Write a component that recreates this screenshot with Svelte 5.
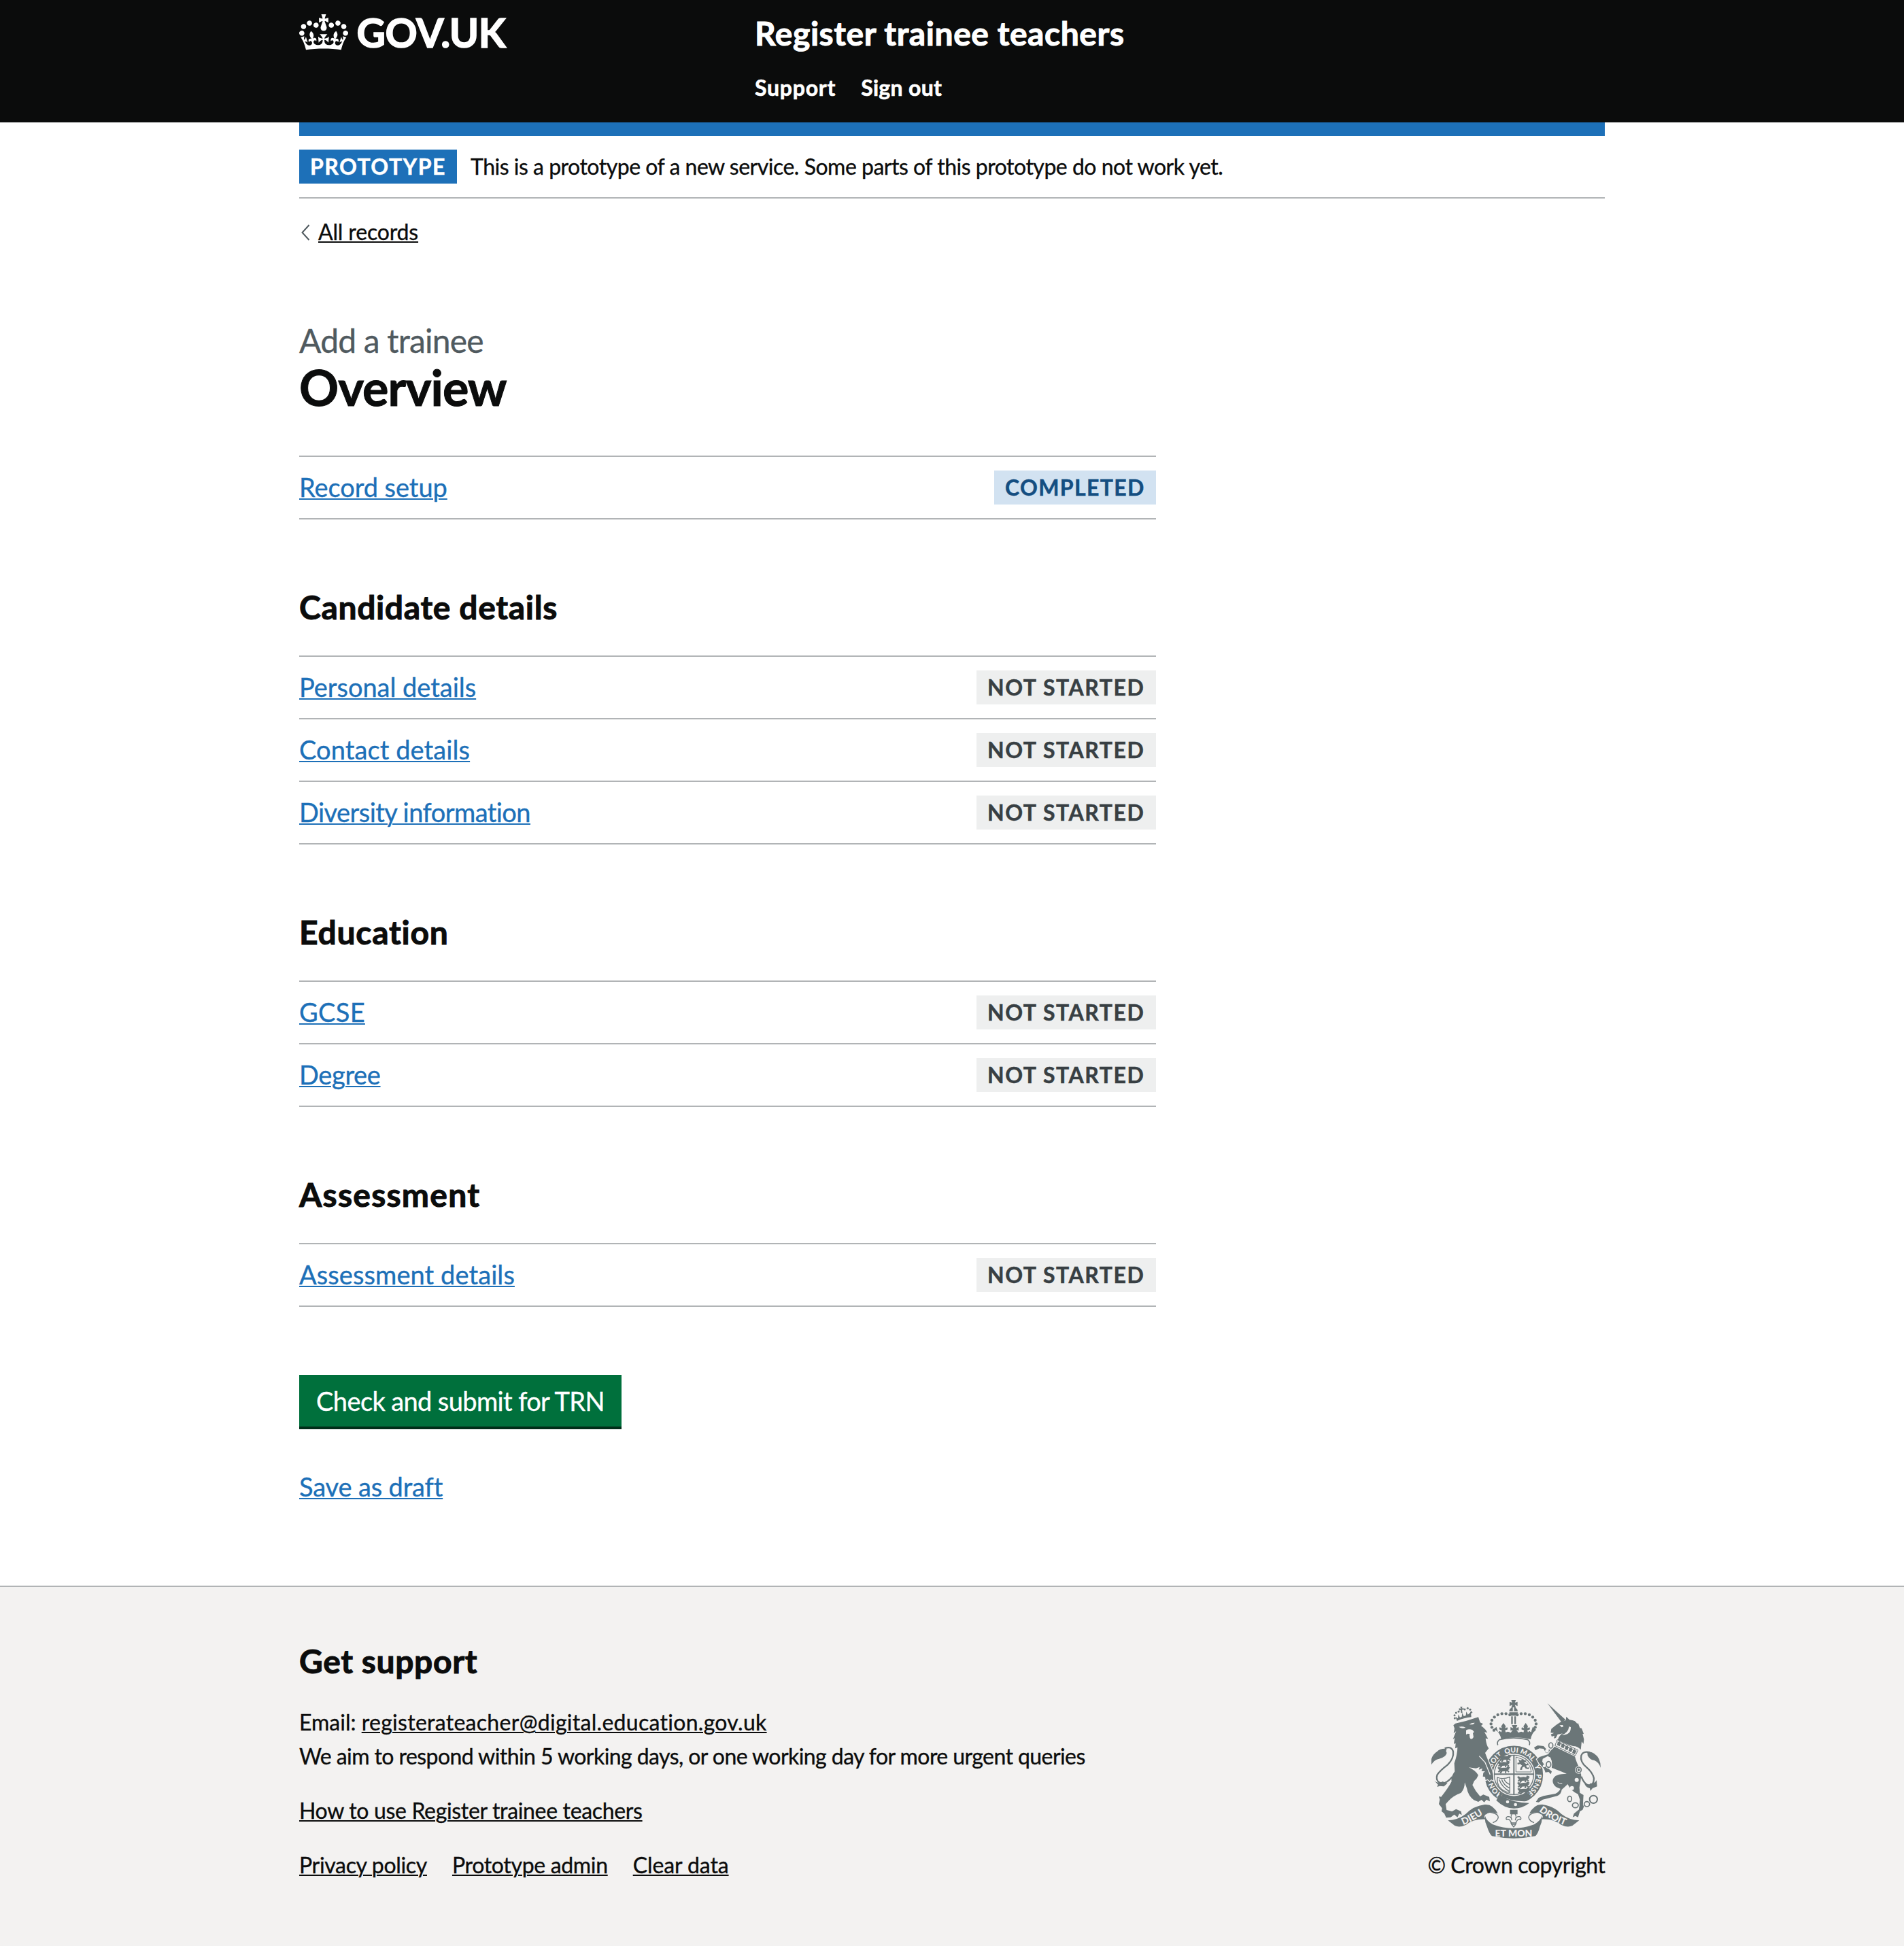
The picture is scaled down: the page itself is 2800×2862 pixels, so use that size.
<script>
  // `tracking` is the letter spacing of a label, in pixels.
  const sections = [
    { tasks: [{ label: 'Record setup', tracking: -0.07, done: true }] },
    {
      heading: 'Candidate details',
      tracking: 0.65,
      tasks: [
        { label: 'Personal details', tracking: -0.03 },
        { label: 'Contact details', tracking: 0.09 },
        { label: 'Diversity information', tracking: -0.55 }
      ]
    },
    {
      heading: 'Education',
      tracking: 0.75,
      tasks: [
        { label: 'GCSE', tracking: 0.3 },
        { label: 'Degree', tracking: -0.35 }
      ]
    },
    {
      heading: 'Assessment',
      tracking: 1.25,
      tasks: [{ label: 'Assessment details', tracking: 0.08 }]
    }
  ];

  // Pearls on the left half of the crown's arches; the right half is mirrored.
  const pearls = [[421, 126], [404, 121], [386, 121], [368, 126], [353, 136], [342, 150], [338, 166], [342, 181], [351, 194]];
  const lionPearls = [[178, 141], [177, 128], [184, 117], [195, 112], [222, 102], [235, 97], [246, 103], [251, 115]];
  const links = [[602, 261, 9, 12], [592, 345, 10, 13], [725, 369, 11, 12], [685, 497, 9, 12], [710, 525, 13, 11], [761, 520, 12, 11]];
  // Rows of walking lions in two of the shield's quarters.
  const passant = [[368, 306], [362, 332], [362, 357], [449, 398], [449, 424], [450, 450]];
  // Ornaments on the unicorn's collar.
  const collar = [[637, 252], [654, 261], [671, 270], [688, 278], [704, 287]];
</script>

<header class="header">
  <div class="container header-grid">
    <a class="logo" href="#home" aria-label="GOV.UK">
      <svg width="330" height="70" viewBox="0 0 330 70">
        <g transform="translate(0 1) scale(0.5455)">
          <path d="M25 30.2c3.5 1.5 7.7-.2 9.1-3.7 1.5-3.6-.2-7.8-3.9-9.2-3.6-1.4-7.6.3-9.1 3.9-1.4 3.5.3 7.5 3.9 9zM9 39.5c3.6 1.5 7.8-.2 9.2-3.7 1.5-3.6-.2-7.8-3.9-9.1-3.6-1.5-7.6.2-9.1 3.8-1.4 3.5.3 7.5 3.8 9zM4.4 57.2c3.5 1.5 7.7-.2 9.1-3.8 1.5-3.6-.2-7.7-3.9-9.1-3.5-1.5-7.6.3-9.1 3.8-1.4 3.5.3 7.6 3.9 9.1zm38.3-21.4c3.5 1.5 7.7-.2 9.1-3.8 1.5-3.6-.2-7.7-3.9-9.1-3.6-1.5-7.6.3-9.1 3.8-1.3 3.6.4 7.7 3.9 9.1zm64.4-5.6c-3.6 1.5-7.8-.2-9.1-3.7-1.5-3.6.2-7.8 3.8-9.2 3.6-1.4 7.7.3 9.2 3.9 1.3 3.5-.4 7.5-3.9 9zm15.9 9.3c-3.6 1.5-7.7-.2-9.1-3.7-1.5-3.6.2-7.8 3.7-9.1 3.6-1.5 7.7.2 9.2 3.8 1.5 3.5-.3 7.5-3.8 9zm4.7 17.7c-3.6 1.5-7.8-.2-9.2-3.8-1.5-3.6.2-7.7 3.9-9.1 3.6-1.5 7.7.3 9.2 3.8 1.3 3.5-.4 7.6-3.9 9.1zM89.3 35.8c-3.6 1.5-7.8-.2-9.2-3.8-1.4-3.6.2-7.7 3.9-9.1 3.6-1.5 7.7.3 9.2 3.8 1.4 3.6-.3 7.7-3.9 9.1zM69.7 17.7l8.9 4.7V9.3l-8.9 2.8c-.2-.3-.5-.6-.9-.9L72.4 0H59.6l3.5 11.2c-.3.3-.6.5-.9.9l-8.8-2.8v13.1l8.8-4.7c.3.3.6.7.9.9l-5 15.4v.1c-.2.8-.4 1.6-.4 2.4 0 4.1 3.1 7.5 7 8.1h.2c.3 0 .7.1 1 .1.4 0 .7 0 1-.1h.2c4-.6 7.1-4.1 7.1-8.1 0-.8-.1-1.7-.4-2.4V34l-5.1-15.4c.4-.2.7-.6 1-.9zM66 92.8c16.9 0 32.8 1.1 47.1 3.2 4-16.9 8.9-26.7 14-33.5l-9.6-3.4c1 4.9 1.1 7.2 0 10.2-1.5-1.4-3-4.3-4.2-8.7L108.6 76c2.8-2 5-3.2 7.5-3.3-4.4 9.4-10 11.9-13.6 11.2-4.3-.8-6.3-4.6-5.6-7.9 1-4.7 5.7-5.9 8-.5 4.3-8.7-3-11.4-7.6-8.8 7.1-7.2 7.9-13.5 2.1-21.1-8 6.1-8.1 12.3-4.5 20.8-4.7-5.4-12.1-2.5-9.5 6.2 3.4-5.2 7.9-2 7.2 3.1-.6 4.3-6.4 7.8-13.5 7.2-10.3-.9-10.9-8-11.2-13.8 2.5-.5 7.1 1.8 11 7.3L80.2 60c-4.1 4.4-8 5.3-12.3 5.4 1.4-4.4 8-11.6 8-11.6H55.5s6.4 7.2 7.9 11.6c-4.2-.1-8-1-12.3-5.4l1.4 16.4c3.9-5.5 8.5-7.7 10.9-7.3-.3 5.8-.9 12.8-11.1 13.8-7.2.6-12.9-2.9-13.5-7.2-.7-5 3.8-8.3 7.1-3.1 2.7-8.7-4.6-11.6-9.4-6.2 3.7-8.5 3.6-14.7-4.6-20.8-5.8 7.6-5 13.9 2.2 21.1-4.7-2.6-11.9.1-7.7 8.8 2.3-5.5 7.1-4.2 8.1.5.7 3.3-1.3 7.1-5.7 7.9-3.5.7-9-1.8-13.5-11.2 2.5.1 4.7 1.3 7.5 3.3l-4.7-15.4c-1.2 4.4-2.7 7.2-4.3 8.7-1.1-3-.9-5.3 0-10.2l-9.5 3.4c5 6.9 9.9 16.7 14 33.5 14.8-2.1 30.8-3.2 47.7-3.2z" />
        </g>
        <text class="logo-text" x="84.5" y="50">GOV.UK</text>
      </svg>
    </a>
    <div>
      <a class="service" href="#service">Register trainee teachers</a>
      <nav class="nav">
        <a href="#support">Support</a>
        <a class="sign-out" href="#sign-out">Sign out</a>
      </nav>
    </div>
  </div>
</header>

<div class="container">
  <div class="bar"></div>
  <div class="phase">
    <strong class="tag tag-phase">PROTOTYPE</strong>
    <span class="phase-text">This is a prototype of a new service. Some parts of this prototype do not work yet.</span>
  </div>

  <div class="back">
    <svg class="chevron" width="16" height="24" viewBox="0 0 16 24"><path d="M14.5 1 4.5 12l10 11" /></svg>
    <a href="#records">All records</a>
  </div>

  <main class="main">
    <span class="caption">Add a trainee</span>
    <h1>Overview</h1>

    {#each sections as section}
      {#if section.heading}
        <h2 class="section-heading" style:letter-spacing="{section.tracking}px">{section.heading}</h2>
      {/if}
      <ul class="tasks">
        {#each section.tasks as task}
          <li>
            <a class="link" href="#task" style:letter-spacing="{task.tracking}px">{task.label}</a>
            {#if task.done}
              <strong class="tag tag-done">COMPLETED</strong>
            {:else}
              <strong class="tag tag-todo">NOT STARTED</strong>
            {/if}
          </li>
        {/each}
      </ul>
    {/each}

    <button class="button">Check and submit for TRN</button>
    <a class="link save" href="#draft">Save as draft</a>
  </main>
</div>

<footer class="footer">
  <div class="container footer-row">
    <div class="footer-main">
      <h2>Get support</h2>
      <p>Email: <a class="email" href="#email">registerateacher@digital.education.gov.uk</a></p>
      <p class="aim">We aim to respond within 5 working days, or one working day for more urgent queries</p>
      <p class="spaced"><a href="#guide">How to use Register trainee teachers</a></p>
      <p class="spaced footer-links">
        <a href="#privacy">Privacy policy</a>
        <a href="#admin">Prototype admin</a>
        <a class="clear" href="#clear">Clear data</a>
      </p>
    </div>

    <div class="crown">
      <svg class="arms" width="250" height="204" viewBox="75 60 750 612">
        <!-- crown -->
        <path d="M427 60h21l-5 13 12-5v20l-12-6 5 13h-21l5-13-12 6V68l12 5zM437 93a19 19 0 0 1 19 17h-38a19 19 0 0 1 19-17zM418 115h39l-8 15h-23zM427 133h7v34h-7zM441 133h7v34h-7z" />
        <path class="cut" d="M434 93h6v17h-6z" />
        {#each pearls as [x, y]}
          <circle cx={x} cy={y} r="6.5" />
          <circle cx={875 - x} cy={y} r="6.5" />
        {/each}
        <path d="M347 192l15-13 7 24 8-6 6 6 3-8-12-5 2-9 10 4-3-9 10-14 10 14-3 9 10-4 2 9-12 5 3 8 10-3 12 5 9-12-10 3v-16l12 5-6-14h24l-6 14 12-5v16l-10-3 9 12 12-5 10 3 3-8-12-5 2-9 10 4-3-9 10-14 10 14-3 9 10-4 2 9-12 5 3 8 6-6 8 6 7-24 15 13q-20 15-24 42-66-16-130 0-4-27-26-42z" />
        <path class="line" d="M375 236q-13 10-7 24M500 236q13 10 7 24M374 236q63-16 127 0" stroke-width="5" />

        <!-- garter and shield -->
        <circle class="ring" cx="439" cy="391" r="111" />
        <path id="garter" fill="none" d="M439 490a99 99 0 0 1 0-198a99 99 0 0 1 0 198" />
        <g class="motto">
          <text><textPath href="#garter" startOffset="86">HON</textPath></text>
          <text><textPath href="#garter" startOffset="222">SOIT</textPath></text>
          <text><textPath href="#garter" startOffset="300">QUI</textPath></text>
          <text><textPath href="#garter" startOffset="370">MAL</textPath></text>
          <text><textPath href="#garter" startOffset="434">Y</textPath></text>
          <text><textPath href="#garter" startOffset="510">PENSE</textPath></text>
        </g>
        <circle class="line" cx="439" cy="391" r="87" stroke-width="4" />
        <path d="M436 304h6v174h-6zM352 385h174v6H352z" />
        <path class="line" d="M448 312v66h68q-4-50-68-66z" stroke-width="3" />
        {#each passant as [x, y]}
          <path transform="translate({x} {y})" d="M4 2l8-3 6 5 14-2 12 1 3-7 8 2 6 5-6 3 2 4-7 2 7 7-3 4-8-6-4 5 3 4h-8l1-8-12 1-5 8h-7l4-9-7 5-5-3 6-7z" />
        {/each}
        <path d="M458 322l11 6 10-8 5 6 10 2-4 7-7 1 10 7 11-2-3 7-9 2 6 9 10-1-5 8-12-3-7-9-8 5-1 9-9 1 2-9 7-10-8-7-11 3-2-8 10-2z" />
        <path class="line" d="M366 402q24 11 55-2v69q-28-2-47-26-11-19-8-41zM374 411q12 34 44 52M385 411q8 24 34 38M396 411q6 14 24 22" stroke-width="4" />

        <!-- strap, buckle and pendant -->
        <path class="cut" d="M366 476q60 38 148 30l-12 22q-70 22-140-28z" />
        <path d="M377 480q54 34 130 35-30 24-68 24-42 0-78-36z" />
        <circle cx="385" cy="496" r="17" class="line" stroke-width="6" />
        <circle class="cut" cx="411" cy="510" r="7" />
        <circle class="cut" cx="446" cy="522" r="7" />
        <path d="M422 545h33v20h-33z" />
        <path class="line" d="M437 556q-17 14-7 34-3-16-18-15-10 3-6 13 8-4 15 3 7 8 7 18h19q0-10 7-18 7-7 15-3 4-10-6-13-15-1-18 15 10-20-8-34zM424 603h27M430 611l8 10 8-10" stroke-width="4" />

        <!-- lion -->
        <path class="over" d="M172 172L181 164Q232 154 282 136L290 160L303 166L294 175Q312 185 322 205L309 202L325 232L314 230Q318 262 328 274L312 294L330 340Q347 376 348 400V416L339 411L332 418L323 410L314 414L312 400L302 398L304 382L312 376L296 374L300 362L284 368L288 356L272 362L240 358Q268 370 282 392Q276 408 264 418L256 436Q268 462 290 486L304 478L330 488L333 508L318 500L308 512L296 501L282 510L262 502Q236 480 232 452L222 424Q222 452 206 470Q172 482 150 506L138 520L142 546L166 552L184 542L206 552L209 568L198 562L190 578L176 566L160 578L140 580L132 562L120 552L122 538L108 520L112 500L108 486L118 488Q150 448 164 420Q160 400 178 376L176 340Q190 300 190 270L180 274L182 252L174 254L178 228L170 234L184 198L173 208L177 186Z" />
        <path class="cut" d="M196 179q16-4 30 3-16 8-30-3zM242 168q12-8 24-7-6 11-24 7zM228 194q14-8 28-1l8 9-6 4 3 18q-4 9-12 9-8-7-5-22l-8-2-8 4z" />
        <path class="cutline" d="M286 308l26 28 22 54" stroke-width="4" />
        {#each lionPearls as [x, y]}<circle cx={x} cy={y} r="4.5" />{/each}
        <path d="M188 153L181 134L192 142L194 124L201 138L209 134L211 118L218 132L227 129L229 112L236 125L249 114L251 136Q218 139 188 153ZM202 90H212L209 98L217 95V105L210 103L212 118H206L204 104L197 107V97L205 99Z" />
        <path class="cutline" d="M186 160Q218 144 254 140" stroke-width="3" />
        <path d="M72 352q-3-44 28-64 16-15 43-12-6 10 0 18-5 20-34 26-24 4-37 32z" />
        <path class="line" d="M134 274q30-12 37 14 4 30-24 58-34 26-46 44-8 22 8 34 24 16 58-24" stroke-width="7" />
        <path d="M88 416q18 18 36 4l22 8-16 14-18-2-12 4 4-10z" />

        <!-- unicorn -->
        <path d="M587 75L667 148L650 160Z" />
        <path d="M601 205L604 188L624 172L644 158L668 150L670 134L684 148Q712 150 718 166L722 162L730 184L738 186L747 210L742 210L748 234L746 254L738 244L734 280Q720 264 700 264Q660 252 632 236Q640 216 654 208Q640 212 632 212L624 228L615 230L618 218L606 222L602 212L616 206Z" />
        <path class="cut" d="M640 172l14-1 4 6-8 4zM690 180q2 34-40 36 30-12 32-38z" />
        <path class="over" d="M604 296L580 294L570 276L552 274L534 282L528 270L544 261L570 264L584 280L604 280Z" />
        <path class="over" d="M618 266L708 310Q716 340 728 360L736 392Q734 420 728 446L730 470L746 480L744 512L748 530L742 545L730 552L722 578L710 572L698 578L704 562L726 544L730 500L722 476Q694 466 676 432Q664 444 650 456Q648 476 630 484L590 494L566 500L548 512L536 510L548 492L570 484L622 474Q640 464 644 452Q612 444 610 418Q612 392 650 388L672 386Q640 372 606 360V330L600 314L588 308L566 320L564 332L574 348L590 362L606 376L602 388L592 378L578 380L572 364L550 340L540 322L552 312L590 300L600 286Z" />
        <path class="collar" d="M630 236L722 282L710 306L620 262Z" />
        {#each collar as [x, y]}
          <path transform="translate({x} {y})" d="M3-10l5 7 5 0-5 6-4 10-12-6 3-9-1-7 5 3z" />
        {/each}
        <path class="cutline" d="M652 430Q640 432 632 424" stroke-width="3" />
        <circle class="cut" cx="716" cy="413" r="9" />
        <circle class="cut" cx="695" cy="449" r="9" />
        <circle class="cut" cx="585" cy="285" r="8" />
        <circle class="cut" cx="572" cy="352" r="6" />
        {#each links as [x, y, rx, ry]}
          <ellipse class="line halo" cx={x} cy={y} {rx} {ry} stroke-width="11" />
          <ellipse class="line" cx={x} cy={y} {rx} {ry} stroke-width="5" />
        {/each}
        <circle class="line" cx="790" cy="499" r="17" stroke-width="6" />
        <path d="M822 360q0-44-28-62-12-10-34-9 6 10 4 16 8 18 30 22 20 8 28 33z" />
        <path class="line" d="M774 292q-30-8-38 14-6 28 24 52 26 22 32 48 0 24-14 32-26 2-42-40" stroke-width="7" />
        <path d="M804 414q-8 16-28 14-6 12-26 2 8 18 24 20l2 12 10-12 20-8z" />

        <!-- ribbon -->
        <path d="M148 592q44-2 78-28 34-36 84-42 36-4 58 40l-12-3q-20-6-34 2-22 10-8 26-54-2-86 24-28 14-50 4z" />
        <path d="M727 592q-44-2-78-28-34-36-84-42-36-4-58 40l12-3q20-6 34 2 22 10 8 26 54-2 86 24 28 14 50 4z" />
        <path class="cut" d="M318 566q10-12 26-8 26 6 27 20-2 16-22 26-22-6-34-22-4-8 3-16zM556 566q-10-12-26-8-26 6-27 20 2 16 22 26 22-6 34-22 4-8-3-16z" />
        <path class="line" d="M314 564q12-12 30-6 25 6 26 20-2 16-24 24M560 564q-12-12-30-6-25 6-26 20 2 16 24 24" stroke-width="4" />
        <path d="M312 572q4 20 34 38 90 34 182 0 30-18 34-38 4 22-8 46-8 32-20 43-96 20-192 0-12-11-22-43-12-24-8-46z" />
        <path id="dieu" fill="none" d="M206 616q54-20 116-64" />
        <path id="droit" fill="none" d="M546 548q54 42 122 68" />
        <g class="ribbon-text">
          <text><textPath href="#dieu" startOffset="60">DIEU</textPath></text>
          <text x="438" y="662">ET MON</text>
          <text><textPath href="#droit" startOffset="70">DROIT</textPath></text>
        </g>
      </svg>
      <span class="copyright">© Crown copyright</span>
    </div>
  </div>
</footer>

<style>
  :global(body) {
    margin: 0;
    background: #fff;
    color: #0b0c0c;
    font-family: Lato, 'Liberation Sans', sans-serif;
    font-size: 32px;
    line-height: 50px;
    -webkit-text-stroke: 0.35px currentColor;
  }
  a {
    color: inherit;
    text-decoration-line: underline;
    text-decoration-thickness: 2px;
    text-underline-offset: 2px;
  }
  h1, h2, p, ul { margin: 0; padding: 0; }
  h1, h2, .header { -webkit-text-stroke: 1px currentColor; }
  .container { width: 1920px; margin: 0 auto; }

  .header { height: 180px; background: #0b0c0c; color: #fff; }
  .header a { text-decoration: none; }
  .header-grid { display: grid; grid-template-columns: 670px 1fr; height: 180px; align-items: start; }
  .logo { padding-top: 20px; }
  .logo svg { display: block; fill: #fff; }
  .logo-text { font-size: 58.5px; font-weight: 700; letter-spacing: -0.4px; stroke: #fff; stroke-width: 1.6px; }
  .service { display: block; padding-top: 20px; font-size: 48px; line-height: 57px; font-weight: 700; letter-spacing: 0.55px; }
  .nav { display: flex; gap: 37px; margin-top: 32px; font-weight: 700; line-height: 40px; letter-spacing: 0.75px; -webkit-text-stroke-width: 0.6px; }
  .sign-out { letter-spacing: 0.3px; }

  .bar { height: 20px; background: #1d70b8; }
  .phase { display: flex; padding: 20px 0; border-bottom: 2px solid #b1b4b6; }
  .phase-text { margin-left: 20px; padding-top: 1px; line-height: 48px; letter-spacing: -0.49px; }
  .tag { box-sizing: border-box; height: 50px; padding: 1px 16px; line-height: 48px; font-weight: 700; white-space: nowrap; -webkit-text-stroke-width: 0.5px; }
  .tag-phase { width: 232px; background: #1d70b8; color: #fff; letter-spacing: 1.45px; }
  .tag-done { width: 238px; background: #d2e2f1; color: #144e81; letter-spacing: 1.35px; }
  .tag-todo { width: 264px; background: #eeefef; color: #383f43; letter-spacing: 1.55px; }

  .back { display: flex; margin-top: 29px; line-height: 40px; letter-spacing: -0.15px; }
  .chevron { margin: 9px 12px 0 0; fill: none; stroke: #505a5f; stroke-width: 2; }

  .main { display: flex; flex-direction: column; align-items: flex-start; width: 1260px; padding: 111px 0 123px; }
  .caption { color: #505a5f; font-size: 48px; line-height: 57px; letter-spacing: -0.8px; }
  h1 { margin-bottom: 61px; font-size: 72px; line-height: 80px; letter-spacing: -0.95px; }
  h2 { font-size: 48px; line-height: 57px; }
  .section-heading { margin: 100px 0 43px; }
  .tasks { width: 100%; list-style: none; border-top: 2px solid #b1b4b6; }
  .tasks li { display: flex; justify-content: space-between; align-items: flex-start; height: 50px; padding: 20px 0; border-bottom: 2px solid #b1b4b6; }
  .link { padding-top: 1px; color: #1d70b8; font-size: 38px; line-height: 46px; }
  .button { width: 474px; height: 76px; margin: 100px 0 0; padding: 15px 0; border: 0; background: #00703c; box-shadow: 0 4px 0 #002d18; color: #fff; font: 38px/46px Lato, 'Liberation Sans', sans-serif; letter-spacing: -0.62px; white-space: nowrap; }
  .save { margin-top: 64px; letter-spacing: -0.15px; }

  .footer { padding: 80px 0 94px; border-top: 2px solid #b1b4b6; background: #f3f2f1; }
  .footer-row { display: flex; justify-content: space-between; align-items: flex-end; }
  .footer h2 { margin-bottom: 37px; letter-spacing: 0.6px; }
  .email { letter-spacing: 0.29px; }
  .aim { letter-spacing: -0.57px; }
  .spaced { margin-top: 30px; letter-spacing: -0.33px; }
  .footer-links { display: flex; gap: 37px; }
  .clear { letter-spacing: -0.1px; }
  .crown { display: flex; flex-direction: column; align-items: center; width: 260px; }
  .copyright { margin-top: 14px; letter-spacing: -0.42px; white-space: nowrap; }

  .arms { fill: #6b7678; }
  .line { fill: none; stroke: #6b7678; stroke-linejoin: round; }
  .ring { fill: none; stroke: #6b7678; stroke-width: 35px; }
  .cut { fill: #f3f2f1; }
  .cutline { fill: none; stroke: #f3f2f1; }
  .halo { stroke: #f3f2f1; }
  .over { stroke: #f3f2f1; stroke-width: 7px; paint-order: stroke; }
  .collar { fill: #f3f2f1; stroke: #6b7678; stroke-width: 3px; }
  .motto, .ribbon-text { fill: #f3f2f1; font-weight: 900; text-anchor: middle; -webkit-text-stroke-width: 0; }
  .motto { font-size: 31px; }
  .ribbon-text { font-size: 42px; }
</style>
